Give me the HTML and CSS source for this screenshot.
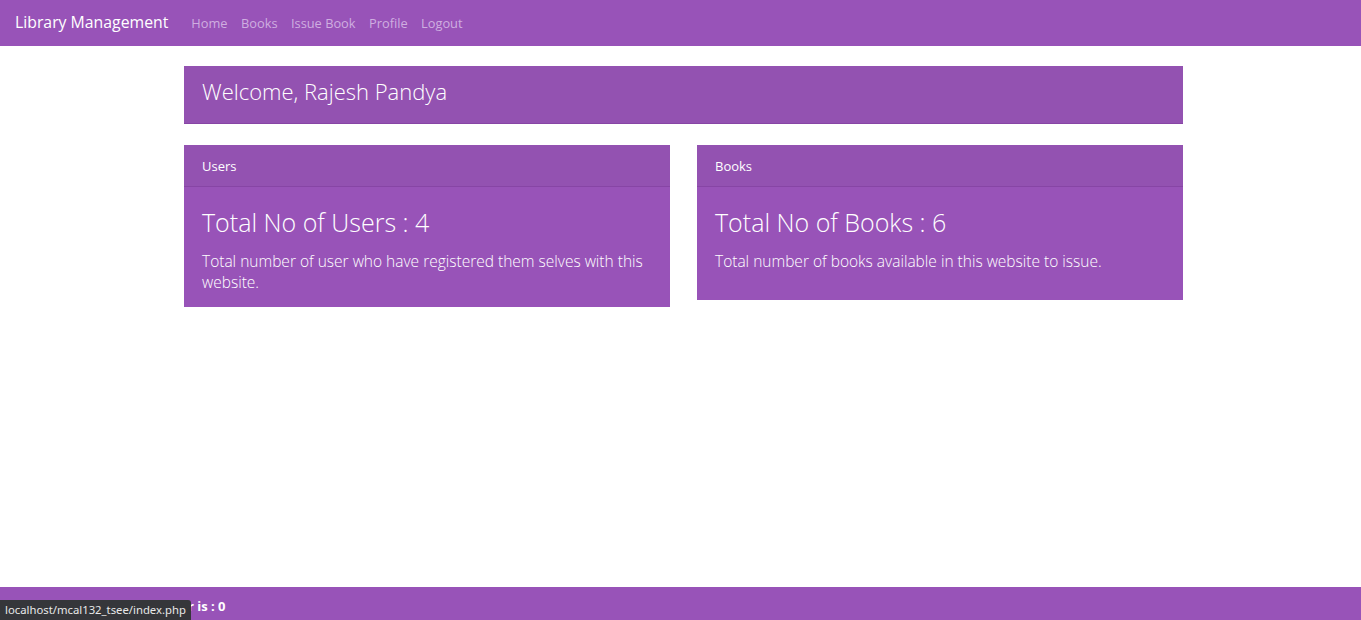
FILE: index.html
```html
<!DOCTYPE html>
<html lang="en">
<head>
<meta charset="utf-8">
<title>Library Management</title>
<link rel="stylesheet" href="styles.css">
</head>
<body>
<nav class="navbar">
  <a class="brand" href="#">Library Management</a>
  <ul class="nav-links">
    <li><a href="#">Home</a></li>
    <li><a href="#">Books</a></li>
    <li><a href="#">Issue Book</a></li>
    <li><a href="#">Profile</a></li>
    <li><a href="#">Logout</a></li>
  </ul>
</nav>
<main class="container">
  <div class="welcome">Welcome, Rajesh Pandya</div>
  <div class="cards">
    <div class="card">
      <div class="card-header">Users</div>
      <div class="card-body">
        <h3 class="card-title">Total No of Users : 4</h3>
        <p class="card-text">Total number of user who have registered them selves with this website.</p>
      </div>
    </div>
    <div class="card">
      <div class="card-header">Books</div>
      <div class="card-body card-body-loose">
        <h3 class="card-title">Total No of Books : 6</h3>
        <p class="card-text">Total number of books available in this website to issue.</p>
      </div>
    </div>
  </div>
</main>
<footer class="footer">
  <span class="footer-text">Total Visitor is : 0</span>
</footer>
<div class="status-url">localhost/mcal132_tsee/index.php</div>
</body>
</html>
```
FILE: styles.css
```css
html, body {
  margin: 0;
  padding: 0;
}
body {
  font-family: "Open Sans", "Noto Sans", sans-serif;
  background: #ffffff;
  color: #ffffff;
  height: 620px;
  overflow: hidden;
}
.navbar {
  display: flex;
  align-items: center;
  height: 46px;
  background: #9853b8;
  padding: 0 15px 2px;
  box-sizing: border-box;
}
.brand {
  color: #ffffff;
  text-decoration: none;
  font-size: 15.8px;
  margin-right: 23px;
}
.nav-links {
  display: flex;
  gap: 13.5px;
  list-style: none;
  margin: 0;
  padding: 0;
}
.nav-links a {
  color: #cfaee0;
  text-decoration: none;
  font-size: 12.8px;
}
.container {
  width: 999px;
  margin: 20px auto 0;
  padding-left: 6px;
}
.welcome {
  background: #9352b1;
  border-bottom: 1px solid #8745a5;
  box-sizing: border-box;
  height: 58px;
  display: flex;
  align-items: center;
  padding: 0 18px 7px;
  font-weight: 300;
  font-size: 22px;
}
.cards {
  display: flex;
  gap: 27px;
  align-items: flex-start;
  margin-top: 21px;
}
.card {
  width: 486px;
  background: #9853b8;
}
.card-header {
  background: #9352b1;
  height: 41px;
  border-bottom: 1px solid #8745a5;
  display: flex;
  align-items: center;
  padding: 0 18px;
  font-size: 13px;
}
.card-body {
  padding: 18px 18px 14px;
}
.card-body-loose {
  padding-bottom: 28px;
}
.card-title {
  margin: 0 0 12px;
  font-weight: 300;
  font-size: 25px;
  line-height: 34px;
}
.card-text {
  margin: 0;
  font-weight: 300;
  font-size: 15.5px;
  line-height: 21px;
}
.footer {
  position: fixed;
  left: 0;
  right: 0;
  bottom: 0;
  height: 33px;
  background: #9853b8;
  display: flex;
  align-items: center;
  padding-left: 115px;
}
.footer-text {
  font-weight: 700;
  font-size: 13px;
  padding-top: 5px;
}
.status-url {
  position: fixed;
  left: 0;
  bottom: 0;
  height: 20px;
  padding: 0 5px;
  background: #35363a;
  color: #e8e8e8;
  font-family: "Noto Sans", sans-serif;
  font-size: 11.3px;
  line-height: 20px;
  border-top-right-radius: 3px;
}
```
